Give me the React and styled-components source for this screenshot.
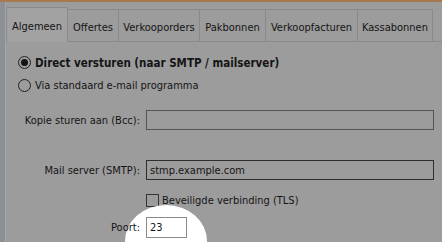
import styled, { createGlobalStyle } from "styled-components";

const GlobalStyle = createGlobalStyle`
  html, body {
    margin: 0;
    padding: 0;
    background: #9c9c9c;
    overflow: hidden;
  }
`;

const Window = styled.div`
  position: relative;
  width: 442px;
  height: 242px;
  box-sizing: border-box;
  border-top: 2px solid #a8784f;
  display: flex;
  background: #9c9c9c;
  font-family: "DejaVu Sans Condensed", "Liberation Sans", sans-serif;
  font-size: 11px;
  color: #151515;
  overflow: hidden;
`;

const Side = styled.div`
  width: 5px;
  background: #8d9097;
  border-right: 1px solid #a6a6a6;
`;

const Main = styled.div`
  flex: 1;
  display: flex;
  flex-direction: column;
`;

const TabBar = styled.div`
  height: 40px;
  display: flex;
  align-items: flex-end;
  padding-left: 1px;
  box-sizing: border-box;
  border-bottom: 1px solid #8a8a8a;
`;

const Tab = styled.div`
  width: ${(p) => p.$w}px;
  height: ${(p) => (p.$active ? 35 : 32)}px;
  margin-left: -1px;
  margin-bottom: ${(p) => (p.$active ? -1 : 0)}px;
  box-sizing: border-box;
  border: 1px solid #8a8a8a;
  border-bottom: none;
  background: ${(p) => (p.$active ? "#a2a2a2" : "#9c9c9c")};
  display: flex;
  align-items: center;
  justify-content: center;
  padding-top: ${(p) => (p.$active ? 2 : 3)}px;
  white-space: nowrap;
  position: relative;
  z-index: ${(p) => (p.$active ? 1 : 0)};
`;

const Panel = styled.div`
  flex: 1;
  padding: 14px 0 0 12px;
  display: flex;
  flex-direction: column;
`;

const RadioRow = styled.label`
  display: flex;
  align-items: center;
  gap: 4px;
  height: 13px;
  margin-bottom: ${(p) => p.$mb || 0}px;
  font-weight: ${(p) => (p.$bold ? 700 : 400)};
  font-size: ${(p) => (p.$bold ? 11.5 : 11)}px;
  white-space: nowrap;
`;

const RadioCircle = styled.span`
  width: 13px;
  height: 13px;
  box-sizing: border-box;
  border-radius: 50%;
  border: 1px solid #222;
  display: flex;
  align-items: center;
  justify-content: center;
  flex-shrink: 0;

  &::after {
    content: "";
    display: ${(p) => (p.$on ? "block" : "none")};
    width: 7px;
    height: 7px;
    border-radius: 50%;
    background: #151515;
  }
`;

const FormGrid = styled.div`
  display: grid;
  grid-template-columns: 134px 288px;
  column-gap: 6px;
  align-items: center;
  margin-left: -12px;
`;

const Label = styled.div`
  text-align: right;
  white-space: nowrap;
  position: relative;
  z-index: 2;
  margin-top: ${(p) => p.$mt || 0}px;
`;

const Field = styled.div`
  height: ${(p) => p.$h || 20}px;
  box-sizing: border-box;
  border: 1px solid ${(p) => p.$border || "#555"};
  background: ${(p) => p.$bg || "transparent"};
  width: ${(p) => (p.$w ? `${p.$w}px` : "auto")};
  display: flex;
  align-items: center;
  padding-left: 3px;
  margin-top: ${(p) => p.$mt || 0}px;
  position: relative;
  z-index: 2;
`;

const CheckRow = styled.div`
  grid-column: 2;
  display: flex;
  align-items: center;
  gap: 3px;
  margin-top: 14px;
  height: 13px;
`;

const CheckBox = styled.span`
  width: 13px;
  height: 13px;
  box-sizing: border-box;
  border: 1px solid #333;
`;

const Spotlight = styled.div`
  position: absolute;
  left: 125px;
  top: 203px;
  width: 82px;
  height: 72px;
  border-radius: 50%;
  background: #ffffff;
  z-index: 1;
`;

const tabs = [
  ["Algemeen", 62],
  ["Offertes", 52],
  ["Verkooporders", 82],
  ["Pakbonnen", 67],
  ["Verkoopfacturen", 93],
  ["Kassabonnen", 76],
];

export default function App() {
  return (
    <>
      <GlobalStyle />
      <Window>
        <Side />
        <Main>
          <TabBar>
            {tabs.map(([t, w], i) => (
              <Tab key={t} $w={w} $active={i === 0}>
                {t}
              </Tab>
            ))}
          </TabBar>
          <Panel>
            <RadioRow $bold $mb={10}>
              <RadioCircle $on />
              Direct versturen (naar SMTP / mailserver)
            </RadioRow>
            <RadioRow $mb={18}>
              <RadioCircle />
              Via standaard e-mail programma
            </RadioRow>
            <FormGrid>
              <Label>Kopie sturen aan (Bcc):</Label>
              <Field />
              <Label $mt={30}>Mail server (SMTP):</Label>
              <Field $border="#2e2e2e" $mt={30}>
                stmp.example.com
              </Field>
              <CheckRow>
                <CheckBox />
                Beveiligde verbinding (TLS)
              </CheckRow>
              <Label $mt={10}>Poort:</Label>
              <Field $w={41} $h={21} $bg="#ffffff" $border="#8a8a8a" $mt={10}>
                23
              </Field>
            </FormGrid>
          </Panel>
        </Main>
        <Spotlight />
      </Window>
    </>
  );
}
